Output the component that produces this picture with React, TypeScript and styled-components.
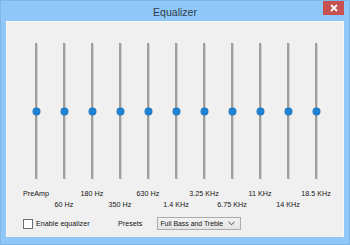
import styled, { createGlobalStyle } from "styled-components";

// Data
const bands = [
  "PreAmp",
  "60 Hz",
  "180 Hz",
  "350 Hz",
  "630 Hz",
  "1.4 KHz",
  "3.25 KHz",
  "6.75 KHz",
  "11 KHz",
  "14 KHz",
  "18.5 KHz",
];

const App = () => {
  return (
    <>
      <GlobalStyle />
      <Window>
        <TitleBar>
          <span />
          <Title>Equalizer</Title>
          <CloseButton>
            <svg width="8" height="8" viewBox="0 0 8 8">
              <path d="M1 1 L7 7 M7 1 L1 7" stroke="#fff" strokeWidth="1.8" />
            </svg>
          </CloseButton>
        </TitleBar>
        <Client>
          <Bands>
            {bands.map((name, i) => (
              <Band key={name}>
                <Track>
                  <Thumb />
                </Track>
                <Label $low={i % 2 === 1}>{name}</Label>
              </Band>
            ))}
          </Bands>
          <Footer>
            <CheckRow>
              <CheckBox />
              <Text>Enable equalizer</Text>
            </CheckRow>
            <Text>Presets</Text>
            <Combo>
              <ComboText>Full Bass and Treble</ComboText>
              <svg width="7" height="5" viewBox="0 0 7 5">
                <path d="M0.5 0.8 L3.5 3.8 L6.5 0.8" stroke="#444" strokeWidth="1" fill="none" />
              </svg>
            </Combo>
          </Footer>
        </Client>
      </Window>
    </>
  );
};

// Styles
const GlobalStyle = createGlobalStyle`
  body {
    margin: 0;
    background: #ffffff;
    font-family: "Liberation Sans", Arial, sans-serif;
  }
`;

const Window = styled.div`
  width: 350px;
  height: 245px;
  box-sizing: border-box;
  border: 1px solid #7fb6e6;
  background-color: #8fc8f8;
  display: flex;
  flex-direction: column;
`;

const TitleBar = styled.div`
  height: 20px;
  display: grid;
  grid-template-columns: 1fr auto 1fr;
  align-items: start;
`;

const Title = styled.div`
  font-size: 10.5px;
  line-height: 20px;
  color: #2f3b48;
  padding-top: 1px;
`;

const CloseButton = styled.div`
  justify-self: end;
  margin-right: 5px;
  width: 21px;
  height: 14px;
  background-color: #c75050;
  display: flex;
  align-items: center;
  justify-content: center;
`;

const Client = styled.div`
  margin: 0 5px;
  height: 216px;
  box-sizing: border-box;
  border: 1px solid #f8f8f8;
  border-bottom: none;
  background-color: #f0f0f0;
  display: flex;
  flex-direction: column;
`;

const Bands = styled.div`
  display: grid;
  grid-template-columns: repeat(11, 28px);
  padding: 21px 0 0 15px;
`;

const Band = styled.div`
  display: flex;
  flex-direction: column;
  align-items: center;
`;

const Track = styled.div`
  width: 2px;
  height: 136px;
  background-color: #9e9e9e;
  box-shadow: 1px 0 0 #d2d2d2;
  display: flex;
  align-items: center;
  justify-content: center;
`;

const Thumb = styled.div`
  flex: none;
  width: 7px;
  height: 7px;
  border-radius: 50%;
  background-color: #1f83d3;
  box-shadow: 0 0 0 0.5px #2a77b8;
`;

const Label = styled.div<{ $low: boolean }>`
  width: 28px;
  display: flex;
  justify-content: center;
  white-space: nowrap;
  font-size: 7.2px;
  line-height: 11px;
  color: #141414;
  margin-top: ${(p) => (p.$low ? "20px" : "9px")};
  margin-bottom: ${(p) => (p.$low ? "0" : "11px")};
`;

const Footer = styled.div`
  display: flex;
  align-items: center;
  padding: 7px 0 0 16px;
`;

const CheckRow = styled.div`
  display: flex;
  align-items: center;
  gap: 3px;
  width: 95px;
`;

const CheckBox = styled.div`
  width: 8px;
  height: 8px;
  border: 1px solid #6e6e6e;
  background-color: #ffffff;
`;

const Text = styled.span`
  font-size: 7.2px;
  color: #141414;
  white-space: nowrap;
`;

const Combo = styled.div`
  flex: none;
  margin-left: 15px;
  width: 84px;
  height: 13px;
  box-sizing: border-box;
  border: 1px solid #acacac;
  background: linear-gradient(#f2f2f2, #e4e4e4);
  display: flex;
  align-items: center;
  justify-content: space-between;
  padding: 0 5px 0 2px;
  color: #141414;
`;

const ComboText = styled.span`
  font-size: 6.9px;
  white-space: nowrap;
`;

// Exports
export default App;
